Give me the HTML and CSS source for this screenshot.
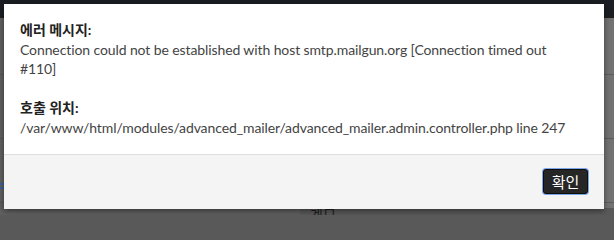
FILE: index.html
```html
<!DOCTYPE html>
<html lang="ko">
<head>
<meta charset="utf-8">
<title>에러</title>
<link rel="stylesheet" href="styles.css">
</head>
<body>
<div class="page">
  <div class="navbar"></div>
  <div class="main">
    <div class="side">
      <div class="row"></div>
      <div class="row link"></div>
      <div class="row"></div>
    </div>
    <div class="content">
      <div class="row"></div>
      <div class="row"></div>
      <div class="row"></div>
      <div class="bottom"><span class="under">계모</span></div>
    </div>
  </div>
</div>

<div class="modal">
  <div class="modal-body">
    <div class="label">에러 메시지:</div>
    <div class="msg">Connection could not be established with host smtp.mailgun.org [Connection timed out #110]</div>
    <div class="gap"></div>
    <div class="label">호출 위치:</div>
    <div class="msg">/var/www/html/modules/advanced_mailer/advanced_mailer.admin.controller.php line 247</div>
  </div>
  <div class="modal-footer">
    <button class="btn">확인</button>
  </div>
</div>
</body>
</html>
```

FILE: styles.css
```css
html, body {
  margin: 0;
  padding: 0;
  overflow: hidden;
  height: 215px;
}
html {
  background: #595959;
}
body {
  width: 614px;
  position: relative;
  background: #6b6b6b;
  font-family: "Lato", "Noto Sans CJK KR", sans-serif;
}
.page {
  display: flex;
  flex-direction: column;
  height: 215px;
  overflow: hidden;
}
.navbar {
  height: 18px;
  flex: none;
  background: #1b1e22;
}
.main {
  flex: 1;
  display: flex;
  overflow: hidden;
}
.side {
  width: 300px;
  background: #606060;
  padding-top: 56px;
}
.content {
  flex: 1;
  background: #727272;
  padding-top: 56px;
  position: relative;
  overflow: hidden;
}
.row {
  height: 64px;
  border-top: 1px solid #5c5c5c;
  box-sizing: border-box;
}
.side .row {
  border-top-color: #575757;
}
.side .link {
  background: linear-gradient(#606060 0 44px, #3f5f96 44px 46px, #606060 46px 48px, #3f5f96 48px 50px, #606060 50px) 0 0 / 4px 100% no-repeat;
}
.bottom {
  position: absolute;
  left: -300px;
  right: 0;
  top: 190px;
  height: 10px;
  background: #595959;
  font-size: 14px;
  color: #1e1e1e;
  overflow: hidden;
}
.under {
  position: absolute;
  left: 310px;
  top: 0;
  line-height: 14px;
}

.modal {
  position: absolute;
  left: 4px;
  top: 4px;
  width: 600px;
  height: 205px;
  background: #fff;
  box-shadow: 0 2px 6px rgba(0, 0, 0, 0.45);
  display: flex;
  flex-direction: column;
  color: #3a3a3a;
}
.modal-body {
  padding: 16px 16px 16px;
  font-size: 14px;
  line-height: 19.6px;
}
.label {
  font-weight: 700;
  color: #222;
}
.msg {
  color: #444;
  max-width: 560px;
  letter-spacing: -0.1px;
}
.gap {
  height: 19.6px;
}
.modal-footer {
  flex: 1;
  min-height: 0;
  border-top: 1px solid #dedede;
  background: #f4f4f4;
  display: flex;
  justify-content: flex-end;
  align-items: flex-start;
  padding: 14px 16px 0;
}
.btn {
  width: 45px;
  height: 25px;
  padding: 0;
  border: 1px solid #0d0d0d;
  border-radius: 3px;
  background: #262626;
  color: #fff;
  font-family: "Noto Sans CJK KR", sans-serif;
  font-size: 15px;
  line-height: 21px;
  box-shadow: 0 0 0 1px #7ba6ea;
}
```
